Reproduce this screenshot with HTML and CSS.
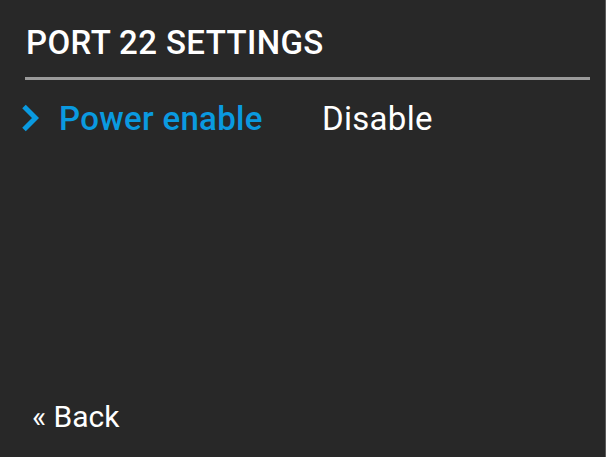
FILE: index.html
```html
<!DOCTYPE html>
<html lang="en">
<head>
    <meta charset="UTF-8">
    <meta name="viewport" content="width=device-width, initial-scale=1.0">
    <title>Port 22 settings</title>
    <link rel="stylesheet" href="styles.css">
</head>
<body>
    <div class="screen">
        <h1 class="title">PORT 22 SETTINGS</h1>
        <div class="divider"></div>
        <ul class="menu">
            <li class="menu-item selected">
                <span class="cursor">
                    <svg width="18" height="28" viewBox="0 0 18 28">
                        <path d="M3 2.5 L14.5 14 L3 25.5" fill="none" stroke="#0a9ae0" stroke-width="5"/>
                    </svg>
                </span>
                <span class="label">Power enable</span>
                <span class="value">Disable</span>
            </li>
        </ul>
        <div class="back">« Back</div>
    </div>
</body>
</html>
```

FILE: styles.css
```css
html, body {
    margin: 0;
    padding: 0;
    background-color: #282828;
}

.screen {
    width: 605px;
    height: 457px;
    border-right: 1px solid #5a5a5a;
    display: flex;
    flex-direction: column;
    font-family: Roboto, "Liberation Sans", sans-serif;
    color: #ffffff;
}

.title {
    margin: 0;
    padding: 24px 0 0 26px;
    font-size: 33px;
    font-weight: 500;
    line-height: 38px;
    letter-spacing: 0.4px;
}

.divider {
    height: 3px;
    margin: 15px 15px 0 25px;
    background-color: #9a9a9a;
}

.menu {
    list-style: none;
    margin: 0;
    padding: 0;
    flex: 1;
}

.menu-item {
    display: flex;
    align-items: center;
    height: 38px;
    margin-top: 19px;
    font-size: 33px;
    letter-spacing: 0.3px;
}

.cursor {
    display: flex;
    width: 18px;
    margin-top: 0;
    margin-left: 21px;
}

.label {
    width: 263px;
    margin-left: 20px;
    color: #0a9ae0;
    font-weight: 500;
}

.value {
    color: #ffffff;
}

.back {
    padding: 0 0 22px 32px;
    font-size: 30px;
    line-height: 36px;
}
```
